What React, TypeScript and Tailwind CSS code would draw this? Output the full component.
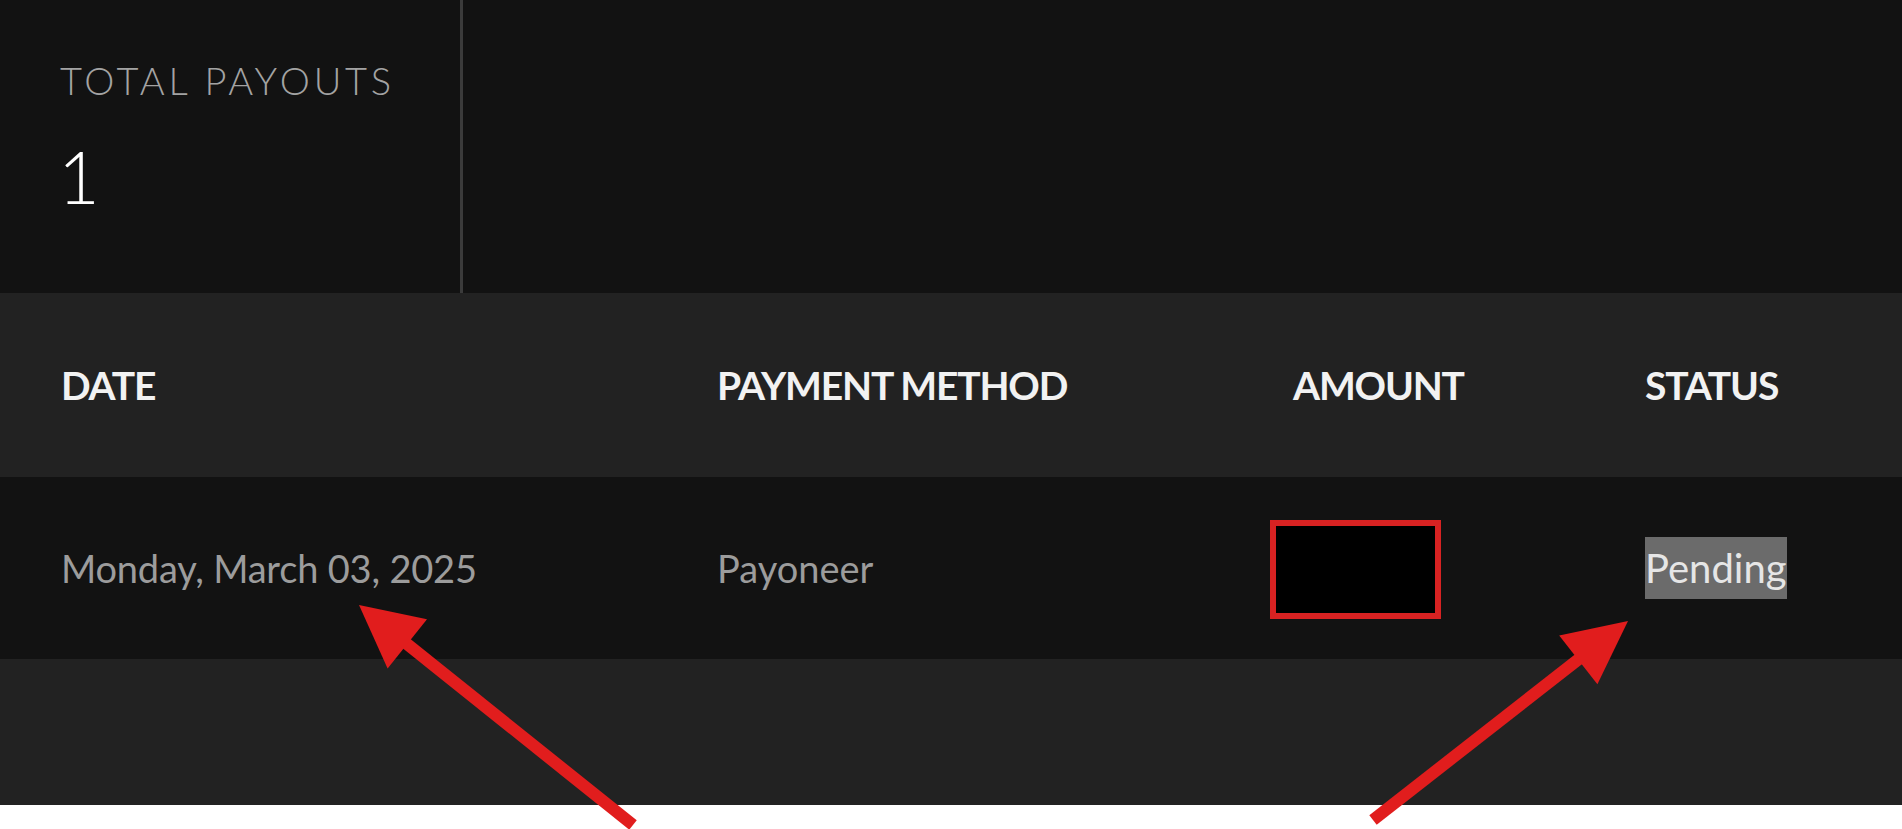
export default function App() {
  return (
    <div className="relative w-full h-[829px] bg-white overflow-hidden font-['Lato','Open_Sans',sans-serif]">
      <div className="flex flex-col h-[805px] bg-[#222222]">
        {/* Summary panel */}
        <div className="flex h-[293px] bg-[#121212]">
          <div className="w-[463px] border-r-[3px] border-[#3b3b3b] pl-[60px] pt-[57px]">
            <div className="text-[38px] leading-[46px] font-light tracking-[0.1em] text-[#a3a3a3]">TOTAL PAYOUTS</div>
            <div className="mt-[36px] -ml-[2px] text-[72px] leading-[74px] font-light text-white">1</div>
          </div>
          <div className="flex-1" />
        </div>

        {/* Header row */}
        <div className="grid grid-cols-[717px_553px_375px_1fr] items-center h-[184px] text-[39px] font-bold text-[#f2f2f2] tracking-[-0.03em]">
          <div className="pl-[61px]">DATE</div>
          <div>PAYMENT METHOD</div>
          <div className="pl-[23px]">AMOUNT</div>
          <div>STATUS</div>
        </div>

        {/* Data row */}
        <div className="grid grid-cols-[717px_553px_375px_1fr] items-center h-[182px] bg-[#121212] text-[38px] text-[#9c9c9c]">
          <div className="pl-[61px] tracking-[-0.005em]">Monday, March 03, 2025</div>
          <div>Payoneer</div>
          <div>
            <div className="w-[171px] h-[99px] bg-black border-[6px] border-[#d82222] mt-[2px]" />
          </div>
          <div>
            <span className="inline-block bg-[#6b6b6b] text-[#e6e6e6] text-[40px] leading-[62px] h-[62px]">Pending</span>
          </div>
        </div>

        <div className="flex-1" />
      </div>

      {/* Annotation arrows */}
      <svg className="absolute inset-0 pointer-events-none" width="1902" height="829" viewBox="0 0 1902 829">
        <line x1="402" y1="640" x2="633" y2="825" stroke="#e11d1d" strokeWidth="12" />
        <polygon points="359,605 387.6,668.4 427,619.2" fill="#e11d1d" />
        <line x1="1584" y1="655" x2="1373" y2="820" stroke="#e11d1d" strokeWidth="12" />
        <polygon points="1628,621 1597.4,684.2 1559.2,635.4" fill="#e11d1d" />
      </svg>
    </div>
  );
}
